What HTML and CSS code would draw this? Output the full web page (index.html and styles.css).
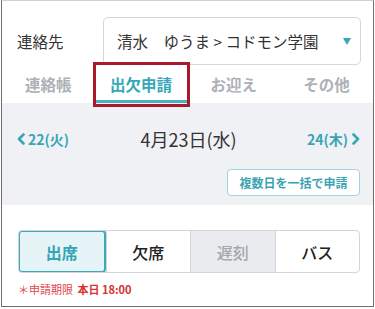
FILE: index.html
```html
<!DOCTYPE html>
<html lang="ja">
<head>
<meta charset="utf-8">
<link rel="stylesheet" href="styles.css">
</head>
<body>
<div class="frame">
  <div class="contact">
    <span class="contact-label">連絡先</span>
    <div class="select">
      <span class="select-text">清水　ゆうま&nbsp;&gt;&nbsp;コドモン学園</span>
      <span class="caret"></span>
    </div>
  </div>
  <div class="tabs">
    <div class="tab">連絡帳</div>
    <div class="tab active">出欠申請</div>
    <div class="tab">お迎え</div>
    <div class="tab">その他</div>
  </div>
  <div class="datebar">
    <div class="daterow">
      <span class="nav prev"><svg class="chev" width="8" height="12" viewBox="0 0 8 12"><polyline points="6.5,1.5 2,6 6.5,10.5" fill="none" stroke="#38a6b7" stroke-width="2.6" stroke-linecap="round" stroke-linejoin="round"/></svg>22(火)</span>
      <span class="today">4月23日(水)</span>
      <span class="nav next">24(木)<svg class="chev" width="8" height="12" viewBox="0 0 8 12"><polyline points="1.5,1.5 6,6 1.5,10.5" fill="none" stroke="#38a6b7" stroke-width="2.6" stroke-linecap="round" stroke-linejoin="round"/></svg></span>
    </div>
    <div class="bulkrow">
      <button class="bulk">複数日を一括で申請</button>
    </div>
  </div>
  <div class="attend">
    <div class="segments">
      <div class="seg on">出席</div>
      <div class="seg">欠席</div>
      <div class="seg dim">遅刻</div>
      <div class="seg">バス</div>
    </div>
    <div class="deadline">＊申請期限 <b>本日 18:00</b></div>
  </div>
  <div class="highlight"></div>
</div>
</body>
</html>
```

FILE: styles.css
```css
* { box-sizing: border-box; }
html, body { margin: 0; padding: 0; background: #fff; }
body { font-family: "Noto Sans CJK JP", "Noto Sans", sans-serif; color: #333; }

.frame {
  position: relative;
  width: 373px;
  height: 307px;
  margin-left: 1px;
  border: 1px solid #6e6e6e;
  border-top-color: #d0d0d0;
  overflow: hidden;
  background: #fff;
}

.contact {
  display: flex;
  align-items: center;
  padding: 16px 12px 0 15px;
}
.contact-label {
  width: 86px;
  font-size: 15.5px;
  color: #333;
}
.select {
  flex: 1;
  height: 48px;
  border: 1px solid #d3d6da;
  border-radius: 5px;
  display: flex;
  align-items: center;
  padding: 0 0 0 13px;
  position: relative;
}
.select-text {
  font-size: 15.5px;
  color: #333;
  white-space: nowrap;
}
.caret {
  position: absolute;
  right: 9px;
  top: 20px;
  width: 0; height: 0;
  border-left: 4px solid transparent;
  border-right: 4px solid transparent;
  border-top: 7px solid #35a6b6;
}

.tabs {
  display: flex;
  height: 37px;
  margin-top: 1px;
}
.tab {
  flex: 1;
  display: flex;
  align-items: center;
  justify-content: center;
  font-size: 15.5px;
  font-weight: 700;
  color: #acb1b6;
  border-bottom: 3px solid transparent;
  padding-top: 2px;
}
.tab.active {
  color: #36a7b8;
  border-bottom-color: #4bb0bf;
}

.datebar {
  background: #f0f1f4;
  padding: 24px 13px 9px 15px;
}
.daterow {
  display: flex;
  align-items: center;
  justify-content: space-between;
  height: 24px;
}
.nav {
  font-size: 14px;
  font-weight: 700;
  color: #38a6b7;
  display: flex;
  align-items: center;
  width: 60px;
}
.next { justify-content: flex-end; }
.chev { display: block; }
.prev .chev { margin-right: 3px; }
.next .chev { margin-left: 4px; }
.today {
  font-size: 18px;
  color: #333;
}
.bulkrow {
  display: flex;
  justify-content: flex-end;
  margin-top: 18px;
}
.bulk {
  font-family: inherit;
  height: 27px;
  width: 133px;
  background: #fff;
  border: 1px solid #9fd6de;
  border-radius: 4px;
  font-size: 12px;
  font-weight: 700;
  color: #3aa4b4;
  padding: 0;
}

.attend {
  padding: 25px 13px 0 16px;
}
.segments {
  display: flex;
  height: 43px;
  border: 1px solid #d2d5d9;
  border-radius: 4px;
  overflow: hidden;
}
.seg {
  flex: 1;
  display: flex;
  align-items: center;
  justify-content: center;
  font-size: 16px;
  font-weight: 500;
  color: #222;
  border-left: 1px solid #d2d5d9;
}
.seg:first-child { border-left: none; }
.seg.on {
  background: #e5f4f7;
  color: #33a5b6;
  font-weight: 700;
  border: 2px solid #3da9b8;
  border-radius: 4px;
  margin: -1px 0 -1px -1px;
}
.seg.dim {
  background: #e9ebee;
  color: #a3a7ab;
}
.deadline {
  margin-top: 8px;
  font-size: 11px;
  color: #e0474c;
  line-height: 16px;
}
.deadline b { font-weight: 700; color: #d8322f; margin-left: 2px; }

.highlight {
  position: absolute;
  left: 91px;
  top: 61px;
  width: 97px;
  height: 45px;
  border: 3px solid #a81a2b;
}
```
